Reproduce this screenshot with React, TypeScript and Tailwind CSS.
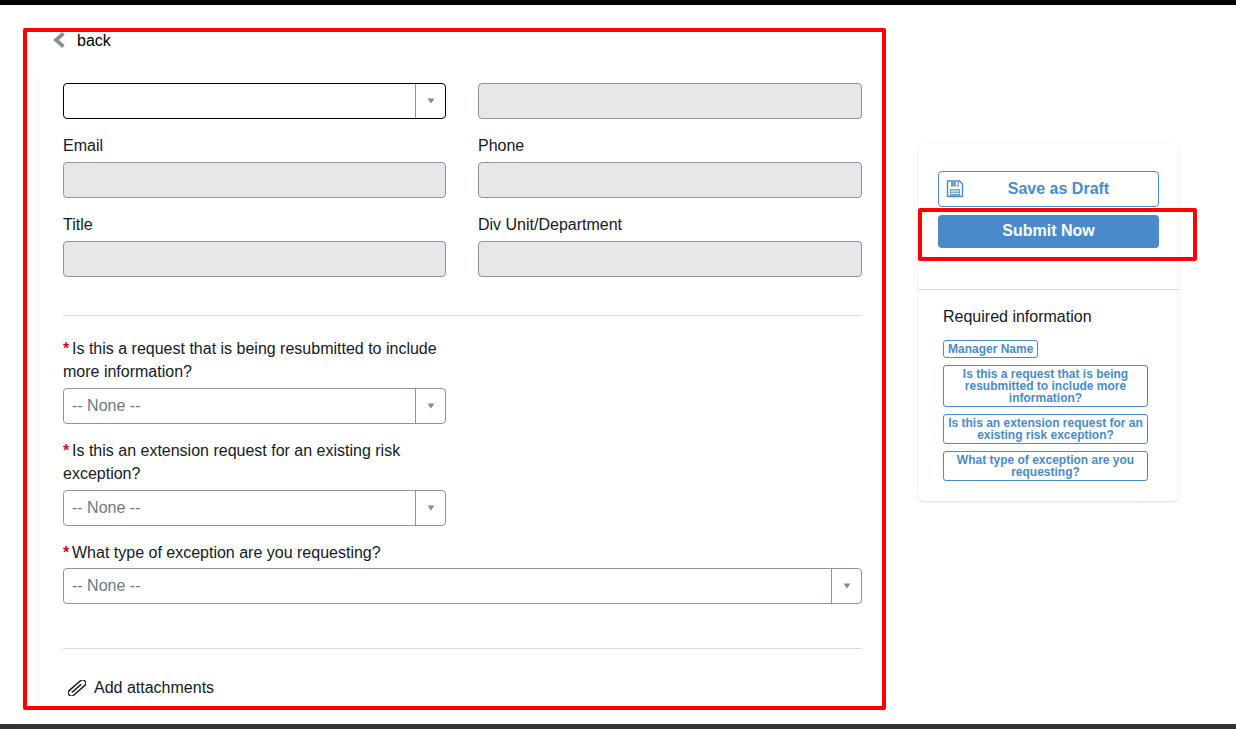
function Arrow() {
  return (
    <span className="flex w-[30px] shrink-0 items-center justify-center self-stretch border-l border-[#8a94a6]">
      <svg width="8" height="6" viewBox="0 0 8 6"><path d="M0.5 0.5h7L4 5.5z" fill="#8a8a8a" /></svg>
    </span>
  );
}

function Select({ placeholder, focused }: { placeholder?: string; focused?: boolean }) {
  return (
    <div className={`flex h-9 items-center rounded border bg-white ${focused ? 'border-black' : 'border-[#8a94a6]'}`}>
      <span className="flex-1 pl-2 text-[#6f7680]">{placeholder}</span>
      <Arrow />
    </div>
  );
}

function ReadOnly() {
  return <div className="h-9 rounded border border-[#8a94a6] bg-[#e6e7e9]" />;
}

function Field({ label }: { label: string }) {
  return (
    <div>
      <div className="mb-[5px] h-6 pt-px leading-[23px]">{label}</div>
      <ReadOnly />
    </div>
  );
}

function Question({ children, tight }: { children: React.ReactNode; tight?: boolean }) {
  return (
    <div className={`leading-[23px] ${tight ? 'mb-1' : 'mb-[5px]'}`}>
      <span className="mr-[2px] inline-block w-[7px] font-bold text-[#c8102e]">*</span>
      {children}
    </div>
  );
}

function Chip({ children, fit }: { children: React.ReactNode; fit?: boolean }) {
  return (
    <div className={`rounded-[3px] border border-[#4a8bc8] bg-white px-1 py-[2px] text-center text-xs leading-3 font-bold text-[#4a8bc8] ${fit ? 'w-fit' : 'w-[205px]'}`}>
      {children}
    </div>
  );
}

function BackChevron() {
  return (
    <svg width="13" height="16" viewBox="0 0 13 16" className="mt-[3px] mr-[11px] shrink-0">
      <path d="M10.500 1.500 3 8l7.500 6.500" fill="none" stroke="#8c8f94" strokeWidth="3.8" />
    </svg>
  );
}

function FloppyIcon() {
  return (
    <svg width="18" height="18" viewBox="0 0 18 18" className="absolute top-[8px] left-[7px]">
      <path d="M1.5 1h12L16.5 4v12.5h-15z" fill="#fff" stroke="#4a8bc8" strokeWidth="1.4" />
      <path d="M5 1h8v5.5H5z" fill="#6da3d6" />
      <path d="M9.8 2h2v3.4h-2z" fill="#fff" />
      <path d="M3.8 9h10.4v7H3.8z" fill="#6da3d6" />
      <path d="M5 11h8M5 13.4h8" stroke="#fff" strokeWidth="1" />
    </svg>
  );
}

function ClipIcon() {
  return (
    <svg width="18" height="16" viewBox="0 0 18 16" className="mr-[8px] shrink-0">
      <g transform="rotate(-41 9 8)" fill="none" stroke="#16191f" strokeWidth="1.4">
        <rect x="-1.500" y="4.800" width="21" height="6.400" rx="3.200" />
        <path d="M2 8h12.500" />
      </g>
    </svg>
  );
}

export default function App() {
  return (
    <div className="relative flex h-[729px] flex-col overflow-hidden bg-white font-['Liberation_Sans',Arial,sans-serif] text-base text-[#16191f]">
      <div className="h-[5px] shrink-0 bg-black" />

      <div className="flex flex-1 overflow-hidden pl-[38px]">
        <div className="w-[848px] shrink-0">
          <div className="flex h-[73px] items-start pt-[24px] pl-[15px] text-black">
            <BackChevron />
            <span className="pt-px leading-[22px]">back</span>
          </div>

          <div className="h-[700px] border-l border-[#f3f3f3] px-[24px] pt-[5px]">
            <div className="grid grid-cols-[383px_384px] gap-x-8 gap-y-[14px]">
              <Select focused />
              <ReadOnly />
              <Field label="Email" />
              <Field label="Phone" />
              <Field label="Title" />
              <Field label="Div Unit/Department" />
            </div>

            <hr className="mt-[38px] w-[799px] border-[#dddbda]" />

            <div className="mt-[21px] w-[383px]">
              <Question>Is this a request that is being resubmitted to include more information?</Question>
              <Select placeholder="-- None --" />
            </div>
            <div className="mt-[15px] w-[383px]">
              <Question>Is this an extension request for an existing risk exception?</Question>
              <Select placeholder="-- None --" />
            </div>
            <div className="mt-[15px] w-[799px]">
              <Question tight>What type of exception are you requesting?</Question>
              <Select placeholder="-- None --" />
            </div>

            <hr className="mt-[44px] w-[799px] border-[#dddbda]" />

            <div className="mt-[27px] flex h-[23px] items-center pl-[5px]">
              <ClipIcon />
              <span>Add attachments</span>
            </div>
          </div>
        </div>

        <div className="mt-[139px] ml-8 h-[357px] w-[261px] shrink-0 rounded-md bg-white shadow-[0_1px_2px_rgba(0,0,0,0.12),0_0_6px_rgba(0,0,0,0.03)]">
          <div className="flex flex-col gap-2 border-b border-[#dddbda] px-5 pt-[27px] pb-[41px]">
            <button className="relative h-9 rounded border border-[#4a8bc8] bg-white font-bold text-[#4a8bc8]">
              <FloppyIcon />
              <span className="pl-[20px]">Save as Draft</span>
            </button>
            <button className="h-[33px] rounded bg-[#488aca] pb-[2px] font-bold text-white">Submit Now</button>
          </div>
          <div className="px-[25px] pt-[15px]">
            <div className="mb-[12px] h-[23px] leading-[23px]">Required information</div>
            <div className="flex flex-col gap-[7px]">
              <Chip fit>Manager Name</Chip>
              <Chip>Is this a request that is being resubmitted to include more information?</Chip>
              <Chip>Is this an extension request for an existing risk exception?</Chip>
              <Chip>What type of exception are you requesting?</Chip>
            </div>
          </div>
        </div>
      </div>

      <div className="h-[5px] shrink-0 bg-[#2f3437]" />

      {/* red annotations drawn over the screenshot */}
      <div className="pointer-events-none absolute top-[28px] left-[23px] h-[682px] w-[863px] rounded-[2px] border-4 border-[#ff0000]" />
      <div className="pointer-events-none absolute top-[208px] left-[918px] h-[53px] w-[279px] rounded-[2px] border-4 border-[#ff0000]" />
    </div>
  );
}
